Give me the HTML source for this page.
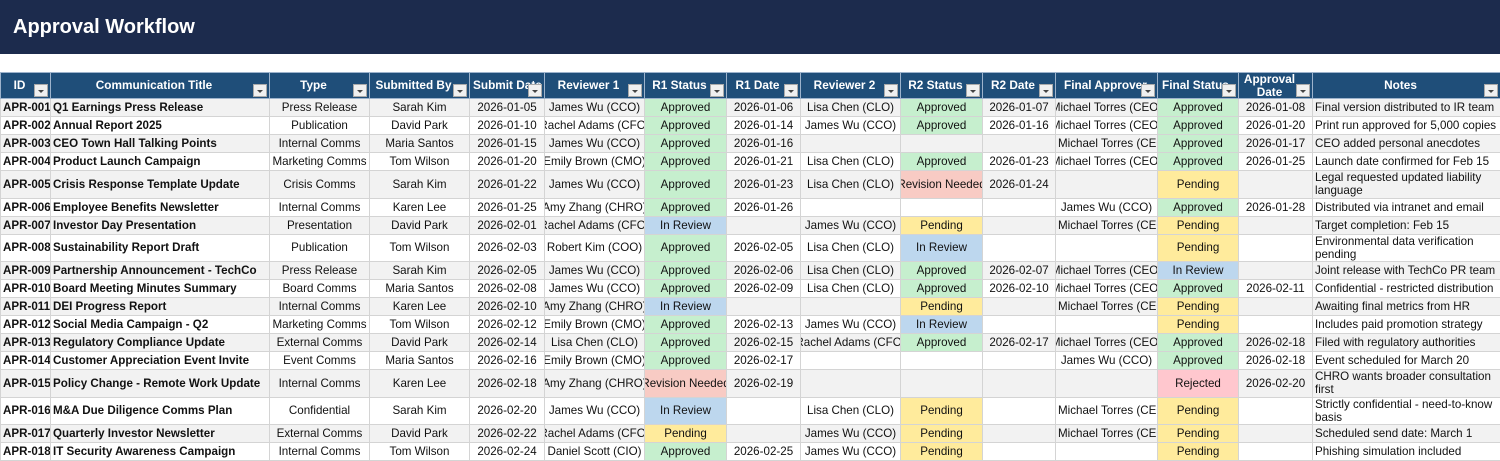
<!DOCTYPE html>
<html><head><meta charset="utf-8">
<style>
*{margin:0;padding:0;box-sizing:border-box}
body{width:1500px;height:460px;overflow:hidden;background:#fff;font-family:"Liberation Sans",Arial,sans-serif;font-size:11.6px;color:#111}
.bar{height:54px;background:#1c2b4d;color:#fff;font-weight:bold;font-size:20px;padding:16px 0 0 13px}
table{position:absolute;top:72px;left:0;width:1500px;border-collapse:collapse;table-layout:fixed}
td,th{border:1px solid #d4d4d4;padding:0;overflow:hidden;white-space:nowrap}
th{background:#1f4e79;color:#fff;font-weight:bold;height:26px;position:relative;border-color:#9db3cc;font-size:11.8px}
th div{display:flex;justify-content:center;align-items:center;height:25px;padding-right:12px;overflow:hidden;line-height:13px;white-space:nowrap;text-align:center}
th div.w{white-space:normal}
th i{position:absolute;right:2px;bottom:1px;width:14px;height:13px;background:#f0f0f0;border:1px solid #aaa}
th i:after{content:"";position:absolute;left:3px;top:5px;border-left:3px solid transparent;border-right:3px solid transparent;border-top:3px solid #444}
td div{display:flex;justify-content:center;align-items:center;overflow:hidden;white-space:nowrap;height:17px}
tr.t td div{height:26.5px}
td.l div{justify-content:flex-start;padding-left:2px}
td.n div{justify-content:flex-start;padding-left:2px;line-height:13px}
tr.t td.n div{white-space:normal;align-items:flex-start;padding-top:0}
td.b{font-weight:bold}
tr.o td{background:#f2f2f2}
tr td.g{background:#c6efce}
tr td.y{background:#ffeb9c}
tr td.u{background:#bdd7ee}
tr td.p{background:#f8cbc4}
tr td.r{background:#ffc7ce}
</style></head><body>
<div class="bar">Approval Workflow</div>
<table>
<colgroup><col style="width:50px"><col style="width:219px"><col style="width:100px"><col style="width:100px"><col style="width:75px"><col style="width:100px"><col style="width:82px"><col style="width:74px"><col style="width:100px"><col style="width:82px"><col style="width:73px"><col style="width:102px"><col style="width:81px"><col style="width:74px"><col style="width:188px"></colgroup>
<tr><th><div>ID</div><i></i></th><th><div>Communication Title</div><i></i></th><th><div>Type</div><i></i></th><th><div>Submitted By</div><i></i></th><th><div style="justify-content:flex-start;padding-left:3px">Submit Date</div><i></i></th><th><div>Reviewer 1</div><i></i></th><th><div>R1 Status</div><i></i></th><th><div>R1 Date</div><i></i></th><th><div>Reviewer 2</div><i></i></th><th><div>R2 Status</div><i></i></th><th><div>R2 Date</div><i></i></th><th><div style="justify-content:flex-start;padding-left:8px">Final Approver</div><i></i></th><th><div style="justify-content:flex-start;padding-left:4px">Final Status</div><i></i></th><th><div class="w">Approval Date</div><i></i></th><th><div>Notes</div><i></i></th></tr>

<tr class="o"><td class="l b"><div>APR-001</div></td><td class="l b"><div>Q1 Earnings Press Release</div></td><td><div>Press Release</div></td><td><div>Sarah Kim</div></td><td><div>2026-01-05</div></td><td><div>James Wu (CCO)</div></td><td class="g"><div>Approved</div></td><td><div>2026-01-06</div></td><td><div>Lisa Chen (CLO)</div></td><td class="g"><div>Approved</div></td><td><div>2026-01-07</div></td><td><div>Michael Torres (CEO)</div></td><td class="g"><div>Approved</div></td><td><div>2026-01-08</div></td><td class="n"><div>Final version distributed to IR team</div></td></tr>

<tr><td class="l b"><div>APR-002</div></td><td class="l b"><div>Annual Report 2025</div></td><td><div>Publication</div></td><td><div>David Park</div></td><td><div>2026-01-10</div></td><td><div>Rachel Adams (CFO)</div></td><td class="g"><div>Approved</div></td><td><div>2026-01-14</div></td><td><div>James Wu (CCO)</div></td><td class="g"><div>Approved</div></td><td><div>2026-01-16</div></td><td><div>Michael Torres (CEO)</div></td><td class="g"><div>Approved</div></td><td><div>2026-01-20</div></td><td class="n"><div>Print run approved for 5,000 copies</div></td></tr>

<tr class="o"><td class="l b"><div>APR-003</div></td><td class="l b"><div>CEO Town Hall Talking Points</div></td><td><div>Internal Comms</div></td><td><div>Maria Santos</div></td><td><div>2026-01-15</div></td><td><div>James Wu (CCO)</div></td><td class="g"><div>Approved</div></td><td><div>2026-01-16</div></td><td><div></div></td><td><div></div></td><td><div></div></td><td class="l"><div>Michael Torres (CEO)</div></td><td class="g"><div>Approved</div></td><td><div>2026-01-17</div></td><td class="n"><div>CEO added personal anecdotes</div></td></tr>

<tr><td class="l b"><div>APR-004</div></td><td class="l b"><div>Product Launch Campaign</div></td><td><div>Marketing Comms</div></td><td><div>Tom Wilson</div></td><td><div>2026-01-20</div></td><td><div>Emily Brown (CMO)</div></td><td class="g"><div>Approved</div></td><td><div>2026-01-21</div></td><td><div>Lisa Chen (CLO)</div></td><td class="g"><div>Approved</div></td><td><div>2026-01-23</div></td><td><div>Michael Torres (CEO)</div></td><td class="g"><div>Approved</div></td><td><div>2026-01-25</div></td><td class="n"><div>Launch date confirmed for Feb 15</div></td></tr>

<tr class="o t"><td class="l b"><div>APR-005</div></td><td class="l b"><div>Crisis Response Template Update</div></td><td><div>Crisis Comms</div></td><td><div>Sarah Kim</div></td><td><div>2026-01-22</div></td><td><div>James Wu (CCO)</div></td><td class="g"><div>Approved</div></td><td><div>2026-01-23</div></td><td><div>Lisa Chen (CLO)</div></td><td class="p"><div>Revision Needed</div></td><td><div>2026-01-24</div></td><td><div></div></td><td class="y"><div>Pending</div></td><td><div></div></td><td class="n"><div>Legal requested updated liability language</div></td></tr>

<tr><td class="l b"><div>APR-006</div></td><td class="l b"><div>Employee Benefits Newsletter</div></td><td><div>Internal Comms</div></td><td><div>Karen Lee</div></td><td><div>2026-01-25</div></td><td><div>Amy Zhang (CHRO)</div></td><td class="g"><div>Approved</div></td><td><div>2026-01-26</div></td><td><div></div></td><td><div></div></td><td><div></div></td><td><div>James Wu (CCO)</div></td><td class="g"><div>Approved</div></td><td><div>2026-01-28</div></td><td class="n"><div>Distributed via intranet and email</div></td></tr>

<tr class="o"><td class="l b"><div>APR-007</div></td><td class="l b"><div>Investor Day Presentation</div></td><td><div>Presentation</div></td><td><div>David Park</div></td><td><div>2026-02-01</div></td><td><div>Rachel Adams (CFO)</div></td><td class="u"><div>In Review</div></td><td><div></div></td><td><div>James Wu (CCO)</div></td><td class="y"><div>Pending</div></td><td><div></div></td><td class="l"><div>Michael Torres (CEO)</div></td><td class="y"><div>Pending</div></td><td><div></div></td><td class="n"><div>Target completion: Feb 15</div></td></tr>

<tr class="t"><td class="l b"><div>APR-008</div></td><td class="l b"><div>Sustainability Report Draft</div></td><td><div>Publication</div></td><td><div>Tom Wilson</div></td><td><div>2026-02-03</div></td><td><div>Robert Kim (COO)</div></td><td class="g"><div>Approved</div></td><td><div>2026-02-05</div></td><td><div>Lisa Chen (CLO)</div></td><td class="u"><div>In Review</div></td><td><div></div></td><td><div></div></td><td class="y"><div>Pending</div></td><td><div></div></td><td class="n"><div>Environmental data verification pending</div></td></tr>

<tr class="o"><td class="l b"><div>APR-009</div></td><td class="l b"><div>Partnership Announcement - TechCo</div></td><td><div>Press Release</div></td><td><div>Sarah Kim</div></td><td><div>2026-02-05</div></td><td><div>James Wu (CCO)</div></td><td class="g"><div>Approved</div></td><td><div>2026-02-06</div></td><td><div>Lisa Chen (CLO)</div></td><td class="g"><div>Approved</div></td><td><div>2026-02-07</div></td><td><div>Michael Torres (CEO)</div></td><td class="u"><div>In Review</div></td><td><div></div></td><td class="n"><div>Joint release with TechCo PR team</div></td></tr>

<tr><td class="l b"><div>APR-010</div></td><td class="l b"><div>Board Meeting Minutes Summary</div></td><td><div>Board Comms</div></td><td><div>Maria Santos</div></td><td><div>2026-02-08</div></td><td><div>James Wu (CCO)</div></td><td class="g"><div>Approved</div></td><td><div>2026-02-09</div></td><td><div>Lisa Chen (CLO)</div></td><td class="g"><div>Approved</div></td><td><div>2026-02-10</div></td><td><div>Michael Torres (CEO)</div></td><td class="g"><div>Approved</div></td><td><div>2026-02-11</div></td><td class="n"><div>Confidential - restricted distribution</div></td></tr>

<tr class="o"><td class="l b"><div>APR-011</div></td><td class="l b"><div>DEI Progress Report</div></td><td><div>Internal Comms</div></td><td><div>Karen Lee</div></td><td><div>2026-02-10</div></td><td><div>Amy Zhang (CHRO)</div></td><td class="u"><div>In Review</div></td><td><div></div></td><td><div></div></td><td class="y"><div>Pending</div></td><td><div></div></td><td class="l"><div>Michael Torres (CEO)</div></td><td class="y"><div>Pending</div></td><td><div></div></td><td class="n"><div>Awaiting final metrics from HR</div></td></tr>

<tr><td class="l b"><div>APR-012</div></td><td class="l b"><div>Social Media Campaign - Q2</div></td><td><div>Marketing Comms</div></td><td><div>Tom Wilson</div></td><td><div>2026-02-12</div></td><td><div>Emily Brown (CMO)</div></td><td class="g"><div>Approved</div></td><td><div>2026-02-13</div></td><td><div>James Wu (CCO)</div></td><td class="u"><div>In Review</div></td><td><div></div></td><td><div></div></td><td class="y"><div>Pending</div></td><td><div></div></td><td class="n"><div>Includes paid promotion strategy</div></td></tr>

<tr class="o"><td class="l b"><div>APR-013</div></td><td class="l b"><div>Regulatory Compliance Update</div></td><td><div>External Comms</div></td><td><div>David Park</div></td><td><div>2026-02-14</div></td><td><div>Lisa Chen (CLO)</div></td><td class="g"><div>Approved</div></td><td><div>2026-02-15</div></td><td><div>Rachel Adams (CFO)</div></td><td class="g"><div>Approved</div></td><td><div>2026-02-17</div></td><td><div>Michael Torres (CEO)</div></td><td class="g"><div>Approved</div></td><td><div>2026-02-18</div></td><td class="n"><div>Filed with regulatory authorities</div></td></tr>

<tr><td class="l b"><div>APR-014</div></td><td class="l b"><div>Customer Appreciation Event Invite</div></td><td><div>Event Comms</div></td><td><div>Maria Santos</div></td><td><div>2026-02-16</div></td><td><div>Emily Brown (CMO)</div></td><td class="g"><div>Approved</div></td><td><div>2026-02-17</div></td><td><div></div></td><td><div></div></td><td><div></div></td><td><div>James Wu (CCO)</div></td><td class="g"><div>Approved</div></td><td><div>2026-02-18</div></td><td class="n"><div>Event scheduled for March 20</div></td></tr>

<tr class="o t"><td class="l b"><div>APR-015</div></td><td class="l b"><div>Policy Change - Remote Work Update</div></td><td><div>Internal Comms</div></td><td><div>Karen Lee</div></td><td><div>2026-02-18</div></td><td><div>Amy Zhang (CHRO)</div></td><td class="p"><div>Revision Needed</div></td><td><div>2026-02-19</div></td><td><div></div></td><td><div></div></td><td><div></div></td><td><div></div></td><td class="r"><div>Rejected</div></td><td><div>2026-02-20</div></td><td class="n"><div>CHRO wants broader consultation first</div></td></tr>

<tr class="t"><td class="l b"><div>APR-016</div></td><td class="l b"><div>M&amp;A Due Diligence Comms Plan</div></td><td><div>Confidential</div></td><td><div>Sarah Kim</div></td><td><div>2026-02-20</div></td><td><div>James Wu (CCO)</div></td><td class="u"><div>In Review</div></td><td><div></div></td><td><div>Lisa Chen (CLO)</div></td><td class="y"><div>Pending</div></td><td><div></div></td><td class="l"><div>Michael Torres (CEO)</div></td><td class="y"><div>Pending</div></td><td><div></div></td><td class="n"><div>Strictly confidential - need-to-know basis</div></td></tr>

<tr class="o"><td class="l b"><div>APR-017</div></td><td class="l b"><div>Quarterly Investor Newsletter</div></td><td><div>External Comms</div></td><td><div>David Park</div></td><td><div>2026-02-22</div></td><td><div>Rachel Adams (CFO)</div></td><td class="y"><div>Pending</div></td><td><div></div></td><td><div>James Wu (CCO)</div></td><td class="y"><div>Pending</div></td><td><div></div></td><td class="l"><div>Michael Torres (CEO)</div></td><td class="y"><div>Pending</div></td><td><div></div></td><td class="n"><div>Scheduled send date: March 1</div></td></tr>

<tr><td class="l b"><div>APR-018</div></td><td class="l b"><div>IT Security Awareness Campaign</div></td><td><div>Internal Comms</div></td><td><div>Tom Wilson</div></td><td><div>2026-02-24</div></td><td><div>Daniel Scott (CIO)</div></td><td class="g"><div>Approved</div></td><td><div>2026-02-25</div></td><td><div>James Wu (CCO)</div></td><td class="y"><div>Pending</div></td><td><div></div></td><td><div></div></td><td class="y"><div>Pending</div></td><td><div></div></td><td class="n"><div>Phishing simulation included</div></td></tr>
</table>
</body></html>
